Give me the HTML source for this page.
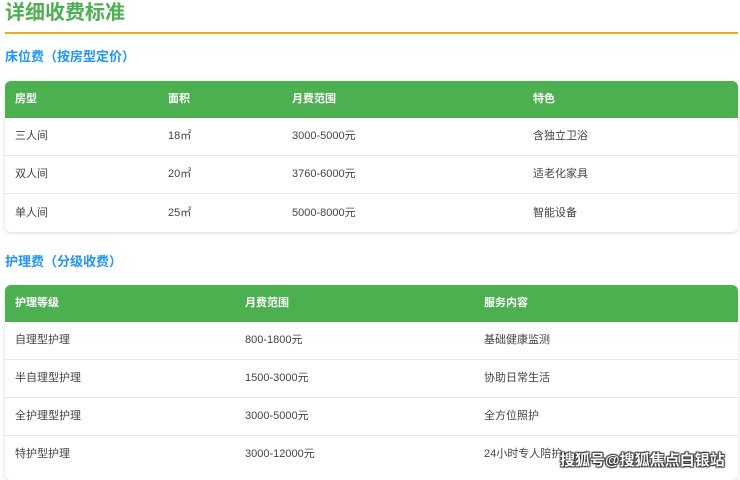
<!DOCTYPE html>
<html><head><meta charset="utf-8"><style>
body{margin:0;width:740px;height:474px;overflow:hidden;background:#fff;font-family:"Liberation Sans","Noto Sans CJK SC",sans-serif;position:relative}
h1{position:absolute;left:5px;top:0px;margin:0;font-size:20px;color:#4CAF50;font-weight:bold;line-height:26px}
.line{position:absolute;left:5px;top:32px;width:733px;height:2px;background:#F5A623}
h2{position:absolute;left:5px;margin:0;font-size:13px;color:#2196F3;font-weight:bold;line-height:18px}
.t{position:absolute;left:5px;width:733px;border-radius:6px;overflow:hidden;box-shadow:0 1px 4px rgba(0,0,0,.15);background:#fff}
.r{position:relative;height:37px;border-bottom:1px solid #e6e6e6;font-size:11px;color:#444}
.r span{position:absolute;top:0;line-height:37px}
.h{background:#4CAF50;color:#fff;font-weight:bold;height:37px;border:none}
.h span{line-height:37px}
.wm{position:absolute;left:560px;top:449px;font-size:15px;color:#fff;font-weight:bold;text-shadow:0 0 1px #333,1px 1px 1px #333,-1px -1px 1px #333,1px -1px 1px #333,-1px 1px 1px #333}
</style></head><body>
<h1>详细收费标准</h1>
<div class="line"></div>
<h2 style="top:48px">床位费（按房型定价）</h2>
<div class="t" style="top:81px">
<div class="r h"><span style="left:10px">房型</span><span style="left:163px">面积</span><span style="left:287px">月费范围</span><span style="left:528px">特色</span></div>
<div class="r"><span style="left:10px">三人间</span><span style="left:163px">18㎡</span><span style="left:287px">3000-5000元</span><span style="left:528px">含独立卫浴</span></div>
<div class="r"><span style="left:10px">双人间</span><span style="left:163px">20㎡</span><span style="left:287px">3760-6000元</span><span style="left:528px">适老化家具</span></div>
<div class="r" style="border:none;height:38px"><span style="left:10px;line-height:38px">单人间</span><span style="left:163px;line-height:38px">25㎡</span><span style="left:287px;line-height:38px">5000-8000元</span><span style="left:528px;line-height:38px">智能设备</span></div>
</div>
<h2 style="top:253px">护理费（分级收费）</h2>
<div class="t" style="top:285px;height:195px">
<div class="r h"><span style="left:10px">护理等级</span><span style="left:240px">月费范围</span><span style="left:479px">服务内容</span></div>
<div class="r"><span style="left:10px">自理型护理</span><span style="left:240px">800-1800元</span><span style="left:479px">基础健康监测</span></div>
<div class="r"><span style="left:10px">半自理型护理</span><span style="left:240px">1500-3000元</span><span style="left:479px">协助日常生活</span></div>
<div class="r"><span style="left:10px">全护理型护理</span><span style="left:240px">3000-5000元</span><span style="left:479px">全方位照护</span></div>
<div class="r" style="border:none"><span style="left:10px">特护型护理</span><span style="left:240px">3000-12000元</span><span style="left:479px">24小时专人陪护</span></div>
</div>
<div class="wm">搜狐号@搜狐焦点白银站</div>
</body></html>
